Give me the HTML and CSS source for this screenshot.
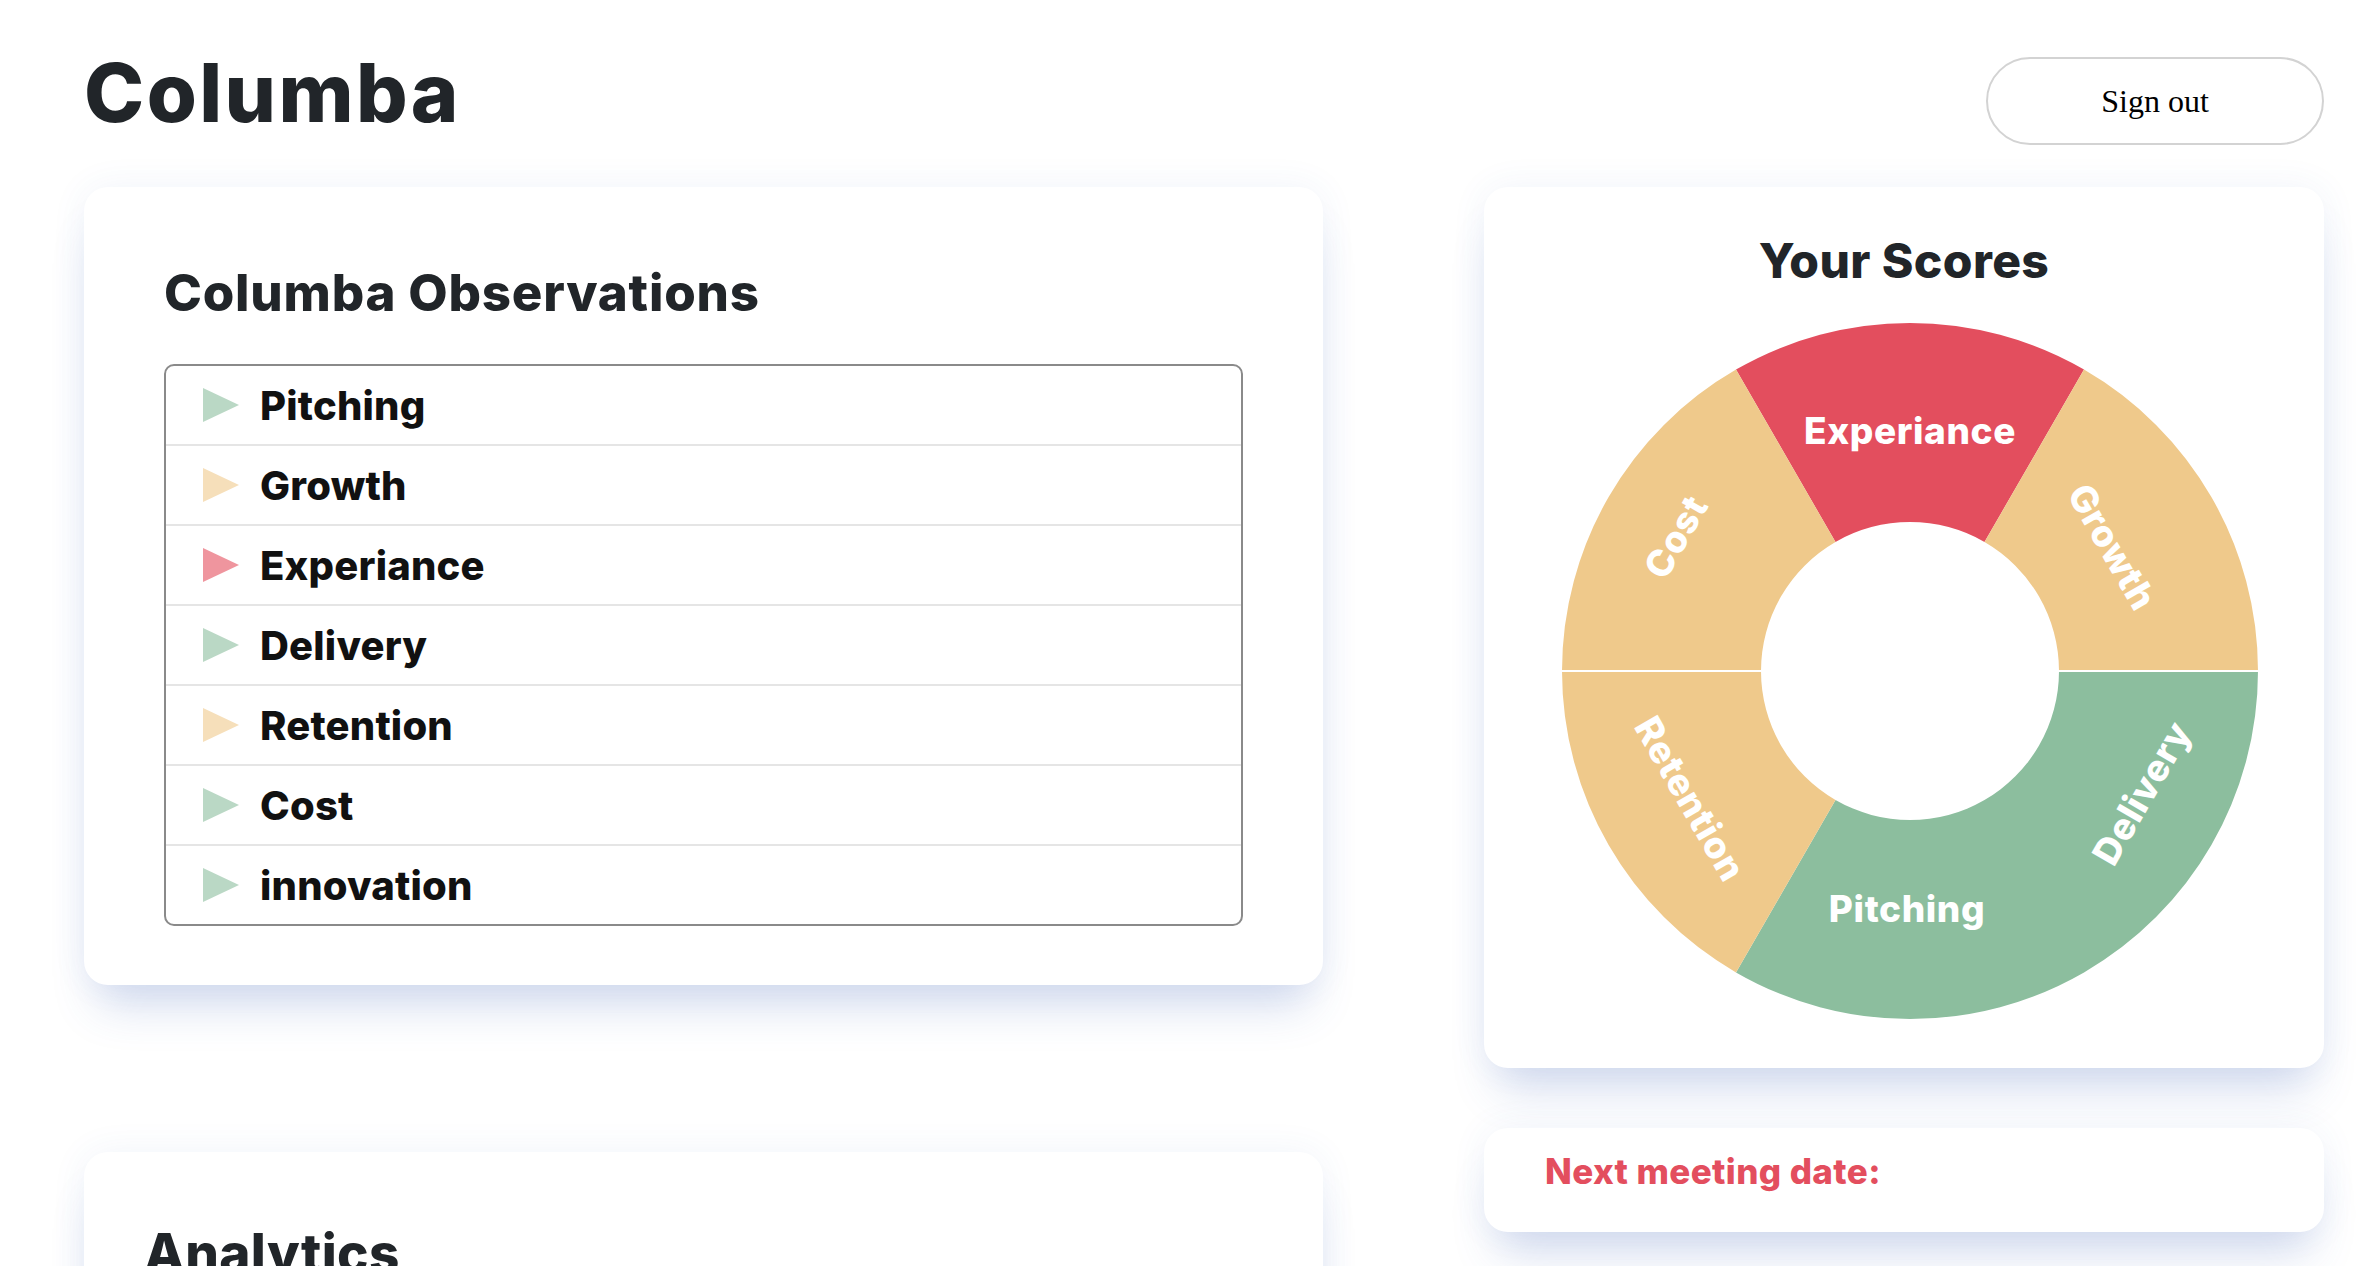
FILE: index.html
```html
<!DOCTYPE html>
<html lang="en">
<head>
<meta charset="utf-8">
<title>Columba</title>
<link rel="stylesheet" href="styles.css">
</head>
<body>
<div class="page">
  <header class="topbar">
    <h1 class="brand">Columba</h1>
    <button class="signout">Sign out</button>
  </header>
  <main class="layout">
    <div class="col col-left">
      <section class="card obs-card">
        <h2 class="card-title">Columba Observations</h2>
        <ul class="obs-list">
          <li class="obs-row"><span class="tri tri-green"></span><span class="obs-label">Pitching</span></li>
          <li class="obs-row"><span class="tri tri-yellow"></span><span class="obs-label">Growth</span></li>
          <li class="obs-row"><span class="tri tri-red"></span><span class="obs-label">Experiance</span></li>
          <li class="obs-row"><span class="tri tri-green"></span><span class="obs-label">Delivery</span></li>
          <li class="obs-row"><span class="tri tri-yellow"></span><span class="obs-label">Retention</span></li>
          <li class="obs-row"><span class="tri tri-green"></span><span class="obs-label">Cost</span></li>
          <li class="obs-row"><span class="tri tri-green"></span><span class="obs-label">innovation</span></li>
        </ul>
      </section>
      <section class="card analytics-card">
        <h2 class="card-title analytics-title">Analytics</h2>
      </section>
    </div>
    <div class="col col-right">
      <section class="card scores-card">
        <h2 class="scores-title">Your Scores</h2>
        <svg class="donut" width="720" height="720" viewBox="-360 -360 720 720">
          <path class="seg-red" d="M -174 -301.4 A 348 348 0 0 1 174 -301.4 L 74.5 -129 A 149 149 0 0 0 -74.5 -129 Z"/>
          <path class="seg-yellow" d="M 174 -301.4 A 348 348 0 0 1 348 0 L 149 0 A 149 149 0 0 0 74.5 -129 Z"/>
          <path class="seg-green" d="M 348 0 A 348 348 0 0 1 -174 301.4 L -74.5 129 A 149 149 0 0 0 149 0 Z"/>
          <path class="seg-yellow" d="M -174 301.4 A 348 348 0 0 1 -348 0 L -149 0 A 149 149 0 0 0 -74.5 129 Z"/>
          <path class="seg-yellow" d="M -348 0 A 348 348 0 0 1 -174 -301.4 L -74.5 -129 A 149 149 0 0 0 -149 0 Z"/>
          <line class="seam" x1="-350" y1="0" x2="350" y2="0"/>
          <g class="seg-labels">
            <text transform="translate(0,-240)" y="13">Experiance</text>
            <text transform="translate(202,-124) rotate(60)" y="13">Growth</text>
            <text transform="translate(232,122) rotate(-60)" y="13">Delivery</text>
            <text transform="translate(-3,238)" y="13">Pitching</text>
            <text transform="translate(-220,128) rotate(60)" y="13">Retention</text>
            <text transform="translate(-234,-134) rotate(-60)" y="13">Cost</text>
          </g>
        </svg>
      </section>
      <section class="card meeting-card">
        <h3 class="meeting-title">Next meeting date:</h3>
      </section>
    </div>
  </main>
</div>
</body>
</html>
```

FILE: styles.css
```css
* { box-sizing: border-box; }

html, body {
  margin: 0;
  padding: 0;
  background: #ffffff;
}

body {
  font-family: Inter, "Noto Sans", "DejaVu Sans", sans-serif;
  color: #212529;
  overflow: hidden;
}

.page {
  padding: 0 44px 0 84px;
}

.topbar {
  display: flex;
  justify-content: space-between;
  align-items: flex-start;
}

.brand {
  margin: 53px 0 0 0;
  font-size: 81px;
  line-height: 80px;
  font-weight: 800;
  letter-spacing: 2.4px;
  color: #212529;
}

.signout {
  margin-top: 57px;
  width: 338px;
  height: 88px;
  border: 2px solid #d3d3d3;
  border-radius: 44px;
  background: #ffffff;
  font-family: "Liberation Serif", "Times New Roman", serif;
  font-size: 32px;
  color: #000000;
  cursor: pointer;
}

.layout {
  display: grid;
  grid-template-columns: 1239px 840px;
  column-gap: 161px;
  margin-top: 42px;
}

.col {
  display: flex;
  flex-direction: column;
}

.card {
  background: #ffffff;
  border-radius: 24px;
  box-shadow: 0 34px 46px -14px rgba(60, 95, 180, 0.22), 0 0 36px rgba(60, 95, 180, 0.07);
}

.obs-card {
  padding: 81px 80px 59px 80px;
}

.card-title {
  margin: 0;
  font-size: 51px;
  line-height: 50px;
  font-weight: 800;
  letter-spacing: 0.8px;
  color: #212529;
}

.obs-list {
  list-style: none;
  margin: 46px 0 0 0;
  padding: 0;
  border: 2px solid #8a8a8a;
  border-radius: 10px;
}

.obs-row {
  display: flex;
  align-items: center;
  height: 80px;
  padding-left: 37px;
  border-top: 2px solid #e5e5e5;
}

.obs-row:first-child {
  height: 78px;
  border-top: none;
}

.tri {
  width: 0;
  height: 0;
  border-top: 17px solid transparent;
  border-bottom: 17px solid transparent;
  border-left: 36px solid #bad8c5;
  margin-right: 21px;
}

.tri-green { border-left-color: #bad8c5; }
.tri-yellow { border-left-color: #f6dfba; }
.tri-red { border-left-color: #ef959e; }

.obs-label {
  font-size: 40px;
  font-weight: 800;
  color: #111111;
  letter-spacing: 0.2px;
}

.analytics-card {
  margin-top: 167px;
  padding: 76px 60px 80px 60px;
  min-height: 300px;
}

.analytics-title {
  font-size: 53px;
  letter-spacing: 0.4px;
}

.scores-card {
  padding: 50px 0 37px 0;
}

.scores-title {
  margin: 0;
  text-align: center;
  font-size: 48px;
  line-height: 48px;
  font-weight: 800;
  letter-spacing: 0.4px;
  color: #212529;
}

.donut {
  display: block;
  margin: 26px 0 0 66px;
}

.seg-red { fill: #e34e5e; }
.seg-yellow { fill: #efc98b; }
.seg-green { fill: #8cbe9e; }

.seam {
  stroke: #ffffff;
  stroke-width: 2;
}

.seg-labels text {
  fill: #ffffff;
  font-family: Inter, "Noto Sans", sans-serif;
  font-weight: 800;
  font-size: 37px;
  letter-spacing: 0.6px;
  text-anchor: middle;
}

.meeting-card {
  margin-top: 60px;
  height: 104px;
  padding: 26px 61px 0 61px;
}

.meeting-title {
  margin: 0;
  font-size: 35px;
  line-height: 34px;
  font-weight: 800;
  letter-spacing: 0.4px;
  color: #e34e5e;
}
```
